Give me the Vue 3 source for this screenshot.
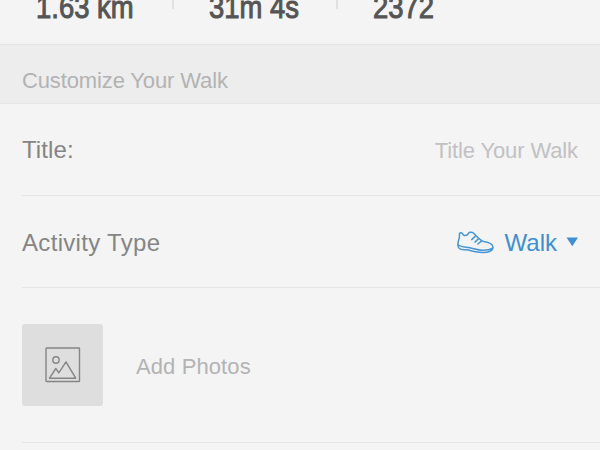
<template>
  <main class="screen">
    <section class="stats">
      <div v-for="stat in stats" :key="stat.key" class="stat" :class="`stat--${stat.key}`">
        <span class="stat__value">{{ stat.value }}</span>
      </div>
    </section>

    <h2 class="section-title"><span>Customize Your Walk</span></h2>

    <div class="rows">
      <label class="row">
        <span class="row__label">Title:</span>
        <input v-model="title" class="row__input" type="text" placeholder="Title Your Walk" />
      </label>

      <div class="row">
        <span class="row__label row__label--activity">Activity Type</span>
        <button class="activity" type="button">
          <svg class="activity__shoe" viewBox="0 0 38 24" width="38" height="24">
            <path d="M2.300 3C2.900 1.600 4.200 1.200 5.200 2.300c.7.800 1 1.900 2.100 2.100 1.100.2 2.100.1 2.900-.5C11.200 3.100 11.600 1.600 12.900 1.300c1.200-.3 2.500-.1 3.500.7 2.400 2.200 5 5.700 8.300 7.700 2.100 1.300 4.600 1.100 6.700 1.900 2.300.9 4.300 2.300 4.500 4.200.2 2.300-1.100 3.900-3.300 4.700-4.300 1.700-9.800.9-14.400.2-3.100-.5-5.700-1.500-8.600-1.900-2.600-.3-5.500.2-7.300-1.300C.6 16.100.8 14 1 12.200 1.300 9 3.200 6.400 2.300 3z" />
            <path d="M1.200 14c3.500 2.500 7.700 1.800 11.800 2.700 4.200.9 8 2.500 12.400 2.500 3.800.1 7.600-.4 10.200-2.100" />
            <path d="M18.200 5.400l-3.500 3.200M21.300 7.900L18 11.100M24.400 10.100l-3.500 2.900" />
          </svg>
          <span class="activity__name">{{ activity }}</span>
          <svg class="activity__caret" viewBox="0 0 12 10" width="12" height="10">
            <path d="M.5 .5h11.500L6.300 9.300z" />
          </svg>
        </button>
      </div>

      <div class="row row--photos">
        <button class="photo" type="button" aria-label="Add Photos">
          <svg viewBox="0 0 36 36" width="36" height="36">
            <rect x="1" y="1" width="33.500" height="33.500" rx=".5" />
            <circle cx="11" cy="13" r="3.200" />
            <path d="M4.500 31.200l6.300-9.700 3 4.300 7.200-10.900 9.700 16.300z" />
          </svg>
        </button>
        <span class="row__hint">Add Photos</span>
      </div>
    </div>
  </main>
</template>

<script setup>
import { ref } from "vue";

const stats = [
  { key: "distance", value: "1.63 km" },
  { key: "duration", value: "31m 4s" },
  { key: "steps", value: "2372" }
];

const title = ref("");
const activity = ref("Walk");
</script>

<style>
body {
  margin: 0;
  background: #f4f4f4;
}
</style>

<style scoped>
.screen {
  width: 600px;
  height: 450px;
  overflow: hidden;
  background: #f4f4f4;
  color: #858585;
  font-family: "Liberation Sans", Arial, sans-serif;
}

.stats {
  display: flex;
  align-items: flex-start;
  height: 44px;
  border-bottom: 1px solid #e4e4e4;
}

.stat {
  box-sizing: border-box;
  height: 9px;
  padding-left: 36px;
}

.stat--distance {
  width: 174px;
  border-right: 2px solid #e0e0e0;
}

.stat--duration {
  width: 164px;
  padding-left: 35px;
  border-right: 2px solid #e0e0e0;
}

.stat--steps {
  padding-left: 35px;
}

.stat__value {
  display: block;
  width: max-content;
  margin-top: -10px;
  color: #555;
  font-size: 31px;
  line-height: 35px;
  -webkit-text-stroke: 1px #555;
  transform: scaleX(0.885);
  transform-origin: left;
}

.section-title {
  box-sizing: border-box;
  height: 59px;
  margin: 0;
  padding: 23px 22px 0;
  border-bottom: 1px solid #e7e7e7;
  background: #ededed;
  color: #b3b3b3;
  font-size: 22px;
  font-weight: 400;
  line-height: 26px;
  letter-spacing: -0.13px;
}

.rows {
  padding-left: 22px;
}

.row {
  box-sizing: border-box;
  display: flex;
  align-items: center;
  height: 92px;
  padding-right: 22px;
  border-bottom: 1px solid #e5e5e5;
}

.row__label {
  font-size: 24px;
  letter-spacing: 0.1px;
}

.row__label--activity {
  padding-top: 2px;
  letter-spacing: 0.32px;
}

.row__input {
  flex: 1;
  min-width: 0;
  padding: 2px 0 0;
  border: none;
  outline: none;
  background: transparent;
  color: #858585;
  font: inherit;
  font-size: 22px;
  letter-spacing: -0.12px;
  text-align: right;
}

.row__input::placeholder {
  color: #c1c1c3;
}

.activity {
  display: flex;
  align-items: center;
  margin-left: auto;
  padding: 0;
  border: none;
  background: transparent;
  color: #3f8fd2;
  font: inherit;
  font-size: 24px;
}

.activity__shoe {
  margin-top: 3px;
  margin-right: 10px;
  fill: none;
  stroke: #4596d6;
  stroke-width: 1.5;
  stroke-linecap: round;
  stroke-linejoin: round;
}

.activity__name {
  padding-top: 2px;
}

.activity__caret {
  margin-left: 9px;
  fill: #3f8fd2;
}

.row--photos {
  height: 155px;
}

.photo {
  display: grid;
  place-items: center;
  width: 81px;
  height: 82px;
  padding: 0;
  border: none;
  border-radius: 3px;
  background: #dedede;
}

.photo svg {
  fill: none;
  stroke: #858585;
  stroke-width: 1.4;
  stroke-linejoin: round;
}

.row__hint {
  margin-left: 33px;
  padding-top: 4px;
  color: #b3b3b3;
  font-size: 22px;
  letter-spacing: 0.1px;
}
</style>
